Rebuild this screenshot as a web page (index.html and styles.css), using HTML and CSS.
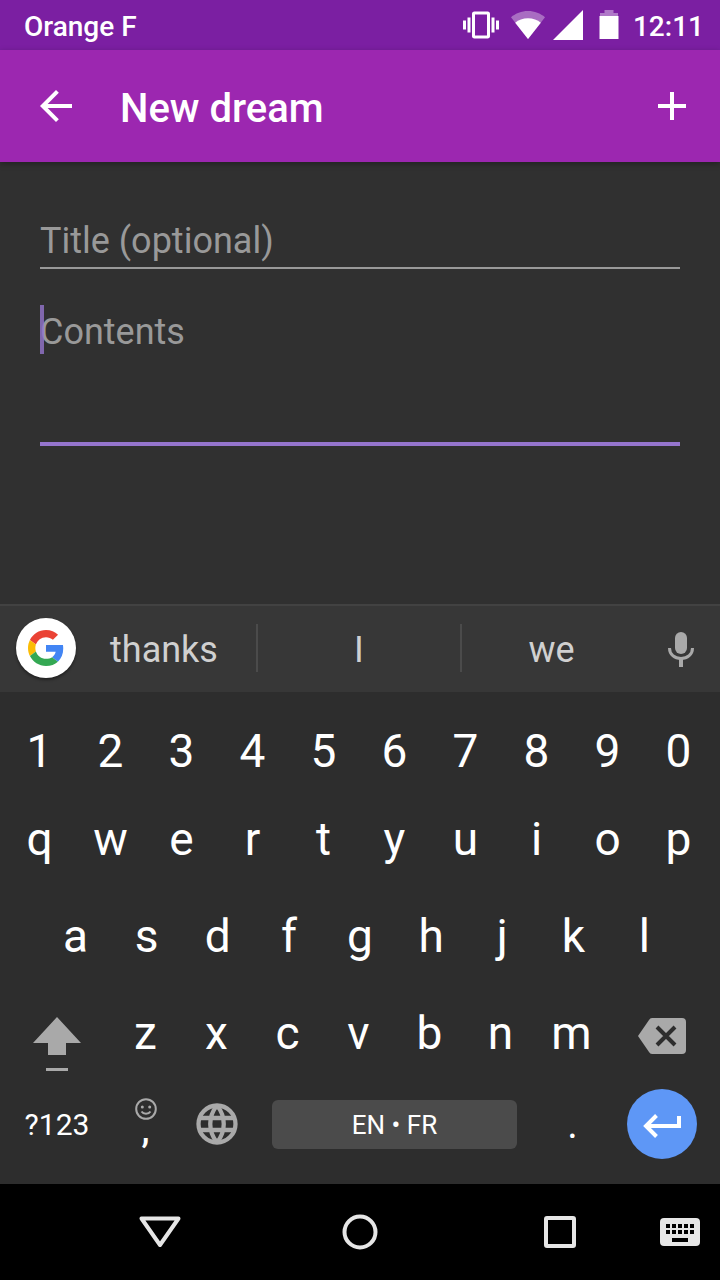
FILE: index.html
```html
<!DOCTYPE html>
<html lang="en">
<head>
<meta charset="utf-8">
<meta name="viewport" content="width=device-width, initial-scale=1">
<title>New dream</title>
<link rel="stylesheet" href="styles.css">
</head>
<body>
<div class="status">
  <span class="carrier">Orange F</span>
  <svg class="vibrate" width="36" height="36" viewBox="0 0 24 24" fill="#fff"><path d="M0 15h2V9H0v6zm3 2h2V7H3v10zm19-8v6h2V9h-2zm-3 8h2V7h-2v10zM16.500 3h-9C6.670 3 6 3.670 6 4.500v15c0 .83.67 1.500 1.500 1.500h9c.83 0 1.500-.67 1.500-1.500v-15c0-.83-.67-1.500-1.500-1.500zM16 19H8V5h8v14z"/></svg>
  <svg class="wifi" width="34" height="28" viewBox="0 0 34 28" fill="#fff"><path opacity=".35" d="M17 28 0 6.200C4.500 2.500 10.500 0 17 0s12.500 2.500 17 6.200z"/><path d="M17 28 4.200 11.700C7.500 9 12 7.300 17 7.300s9.500 1.700 12.800 4.400z"/></svg>
  <svg class="signal" width="30" height="30" viewBox="0 0 30 30" fill="#fff"><path d="M0 30h30V0z"/></svg>
  <svg class="battery" width="20" height="30" viewBox="0 0 20 30" fill="#fff"><path opacity=".4" d="M1 3h4.500V0h9v3H19v3H1z"/><path d="M.5 6h19v23H.5z"/></svg>
  <time>12:11</time>
</div>
<header class="appbar">
  <button aria-label="Back"><svg width="48" height="48" viewBox="0 0 24 24" fill="#fff"><path d="M20 11H7.830l5.590-5.590L12 4l-8 8 8 8 1.410-1.410L7.830 13H20v-2z"/></svg></button>
  <h1>New dream</h1>
  <button aria-label="Add"><svg width="48" height="48" viewBox="0 0 24 24" fill="#fff"><path d="M19 13h-6v6h-2v-6H5v-2h6V5h2v6h6v2z"/></svg></button>
</header>
<main class="form">
  <input class="field" type="text" aria-label="Title" placeholder="Title (optional)">
  <div class="contents">
    <textarea class="field active" aria-label="Contents" placeholder="Contents"></textarea>
    <span class="caret"></span>
  </div>
</main>
<section class="keyboard" aria-label="Keyboard">
  <div class="suggestions">
    <button class="google" aria-label="Google search"><svg width="36" height="36" viewBox="0 0 48 48"><path fill="#ea4335" d="M24 9.500c3.540 0 6.710 1.220 9.210 3.600l6.850-6.850C35.900 2.380 30.470 0 24 0 14.620 0 6.510 5.380 2.560 13.220l7.980 6.190C12.430 13.720 17.740 9.500 24 9.500z"/><path fill="#4285f4" d="M46.980 24.550c0-1.570-.15-3.090-.38-4.550H24v9.020h12.940c-.58 2.960-2.260 5.480-4.780 7.180l7.730 6c4.510-4.180 7.090-10.360 7.090-17.650z"/><path fill="#fbbc05" d="M10.530 28.590c-.48-1.450-.76-2.990-.76-4.590s.27-3.140.76-4.590l-7.980-6.190C.92 16.460 0 20.120 0 24s.92 7.540 2.560 10.780l7.970-6.190z"/><path fill="#34a853" d="M24 48c6.480 0 11.930-2.130 15.890-5.810l-7.730-6c-2.150 1.450-4.920 2.300-8.160 2.300-6.260 0-11.570-4.220-13.470-9.910l-7.980 6.190C6.510 42.620 14.620 48 24 48z"/></svg></button>
    <button class="word">thanks</button>
    <button class="word middle">I</button>
    <button class="word">we</button>
    <button aria-label="Voice input"><svg width="48" height="48" viewBox="0 0 48 48"><rect x="18" y="8" width="12" height="22" rx="6" fill="#a9a9a9"/><path d="M12.500 24C12.500 30.500 17.500 34.500 24 34.500s11.500-4 11.500-10.500" fill="none" stroke="#a9a9a9" stroke-width="3"/><path d="M22 34h4v9h-4z" fill="#a9a9a9"/></svg></button>
  </div>
  <div class="keys">
    <div class="row numbers"><button>1</button><button>2</button><button>3</button><button>4</button><button>5</button><button>6</button><button>7</button><button>8</button><button>9</button><button>0</button></div>
    <div class="row"><button>q</button><button>w</button><button>e</button><button>r</button><button>t</button><button>y</button><button>u</button><button>i</button><button>o</button><button>p</button></div>
    <div class="row home"><button>a</button><button>s</button><button>d</button><button>f</button><button>g</button><button>h</button><button>j</button><button>k</button><button>l</button></div>
    <div class="row lower">
      <button aria-label="Shift"><svg width="48" height="72" viewBox="0 0 48 72" fill="#a9a9a9"><path d="M24 20 48 46H33v12H15V46H0zM13 71h22v3H13z"/></svg></button>
      <button>z</button><button>x</button><button>c</button><button>v</button><button>b</button><button>n</button><button>m</button>
      <button class="backspace" aria-label="Backspace"><svg width="48" height="36" viewBox="0 0 48 36"><path fill="#a9a9a9" d="M14 0h30q4 0 4 4v28q0 4-4 4H14q-2 0-3-2L0 18 11 2q1-2 3-2z"/><path d="m19 9 18 18m0-18L19 27" stroke="#2d2d2d" stroke-width="4"/></svg></button>
    </div>
    <div class="row bottom">
      <button class="symbols">?123</button>
      <button class="comma"><svg width="22" height="22" viewBox="0 0 22 22" fill="none" stroke="#a9a9a9" stroke-width="2"><circle cx="11" cy="11" r="9.800"/><path d="M6.500 13.500c2 3 7 3 9 0"/><circle cx="7.300" cy="9" r="1.500" fill="#a9a9a9" stroke="none"/><circle cx="14.700" cy="9" r="1.500" fill="#a9a9a9" stroke="none"/></svg><span>,</span></button>
      <button aria-label="Switch language"><svg width="42" height="42" viewBox="0 0 42 42" fill="none" stroke="#a9a9a9" stroke-width="4.300"><circle cx="21" cy="21" r="18.500"/><path d="M4 15h34M4 27h34M21 2.500c-9 11-9 26 0 37M21 2.500c9 11 9 26 0 37"/></svg></button>
      <button class="space">EN • FR</button>
      <button class="period">.</button>
      <button class="enter" aria-label="Enter"><svg width="38" height="28" viewBox="0 0 38 28" fill="none" stroke="#fff" stroke-width="4"><path d="M36 6v10H3M13.500 5.500 3 16l10.500 10.500"/></svg></button>
    </div>
  </div>
</section>
<nav class="navbar">
  <button class="back" aria-label="Back"><svg width="42" height="32" viewBox="0 0 42 32" fill="none" stroke="#e6e6e6" stroke-width="4" stroke-linejoin="round"><path d="M2.500 2.500h37L21 29z"/></svg></button>
  <button aria-label="Home"><svg width="36" height="36" viewBox="0 0 36 36" fill="none" stroke="#e6e6e6" stroke-width="4"><circle cx="18" cy="18" r="15.500"/></svg></button>
  <button aria-label="Recent apps"><svg width="32" height="32" viewBox="0 0 32 32" fill="none" stroke="#e6e6e6" stroke-width="4"><rect x="2" y="2" width="28" height="28" rx="1"/></svg></button>
  <button class="switcher" aria-label="Choose keyboard"><svg width="40" height="28" viewBox="0 0 40 28"><rect width="40" height="28" rx="4" fill="#e6e6e6"/><path d="M6 8h28M6 14h28" stroke="#000" stroke-width="4" stroke-dasharray="4 2"/><path d="M12 20h16v4H12z"/></svg></button>
</nav>
</body>
</html>
```
FILE: styles.css
```css
* {
  box-sizing: border-box;
}

body {
  margin: 0;
  min-height: 100vh;
  display: flex;
  flex-direction: column;
  background: #303030;
  color: #fff;
  font-family: Roboto, sans-serif;
}

button {
  margin: 0;
  padding: 0;
  border: 0;
  background: none;
  color: inherit;
  font: inherit;
  display: flex;
  align-items: center;
  justify-content: center;
}

svg {
  display: block;
  flex: none;
  overflow: visible;
}

.status {
  display: flex;
  align-items: center;
  height: 50px;
  padding: 0 16px 0 24px;
  background: #7b1fa2;
  font-size: 28px;
  font-weight: 500;
  line-height: 40px;
}

.carrier {
  flex: 1;
}

.carrier,
.status time {
  padding-top: 4px;
}

.wifi {
  margin: 0 8px 0 12px;
}

.battery {
  margin: 0 14px 0 16px;
}

.appbar {
  display: flex;
  align-items: center;
  height: 112px;
  padding: 0 24px 0 32px;
  background: #9c27b0;
  box-shadow: 0 2px 6px rgba(0, 0, 0, 0.3);
}

.appbar h1 {
  flex: 1;
  margin: 6px 0 0 40px;
  font-size: 40px;
  font-weight: 500;
  line-height: 48px;
}

.form {
  flex: 1;
  display: flex;
  flex-direction: column;
  gap: 36px;
  padding: 56px 40px 32px;
}

.field {
  display: block;
  width: 100%;
  height: 51px;
  margin: 0;
  padding: 0 0 4px;
  border: 0;
  border-bottom: 2px solid #999;
  border-radius: 0;
  outline: 0;
  background: none;
  color: #fff;
  font: 36px/48px Roboto, sans-serif;
  resize: none;
}

.field::placeholder {
  color: #999;
  opacity: 1;
}

.contents {
  position: relative;
}

.active {
  height: 141px;
  padding-top: 3px;
  border-bottom: 4px solid #9575cd;
}

.caret {
  position: absolute;
  left: 0;
  top: 0;
  width: 4px;
  height: 49px;
  background: #9575cd;
  opacity: 0.8;
}

.suggestions {
  display: grid;
  grid-template-columns: minmax(0, 72fr) 184fr 206fr 179fr 79fr;
  align-items: center;
  height: 88px;
  padding-bottom: 2px;
  border-top: 2px solid #424242;
  background: #373737;
  color: #d0d0d0;
  font-size: 36px;
}

.google {
  width: 60px;
  height: 60px;
  margin-left: 16px;
  border-radius: 50%;
  background: #fff;
  box-shadow: 0 2px 3px rgba(0, 0, 0, 0.4);
}

.word {
  height: 48px;
  padding-top: 4px;
}

.middle {
  border: solid #4b4b4b;
  border-width: 0 2px;
}

.keys {
  padding: 20px 4px 17px;
  background: #2d2d2d;
  font-size: 46px;
}

.row {
  display: grid;
  grid-template-columns: repeat(10, 1fr);
  height: 97px;
  padding-right: 2px;
}

.numbers {
  height: 78px;
}

.home {
  grid-template-columns: repeat(9, 1fr);
  padding: 0 36px;
}

.lower {
  grid-template-columns: 106fr repeat(7, 71fr) 109fr;
  padding: 0;
}

.backspace {
  padding-top: 6px;
}

.bottom {
  grid-template-columns: 106fr 71fr 71fr 285fr 71fr 108fr;
  align-items: center;
  height: 86px;
  padding: 0;
}

.symbols {
  font-size: 30px;
}

.comma {
  flex-direction: column;
  padding-bottom: 10px;
  font-size: 36px;
  font-weight: 500;
  line-height: 20px;
}

.bottom .space {
  height: 49px;
  margin: 0 20px;
  padding-top: 2px;
  border-radius: 6px;
  background: #4b4b4b;
  font-size: 26px;
}

.period {
  font-size: 40px;
}

.enter {
  justify-self: center;
  width: 70px;
  height: 70px;
  border-radius: 50%;
  background: #5e97f6;
}

.navbar {
  display: grid;
  grid-template-columns: 200fr 200fr 200fr 60fr;
  height: 96px;
  padding-left: calc(100% / 12);
  background: #000;
}

.switcher {
  justify-content: flex-start;
}
```
